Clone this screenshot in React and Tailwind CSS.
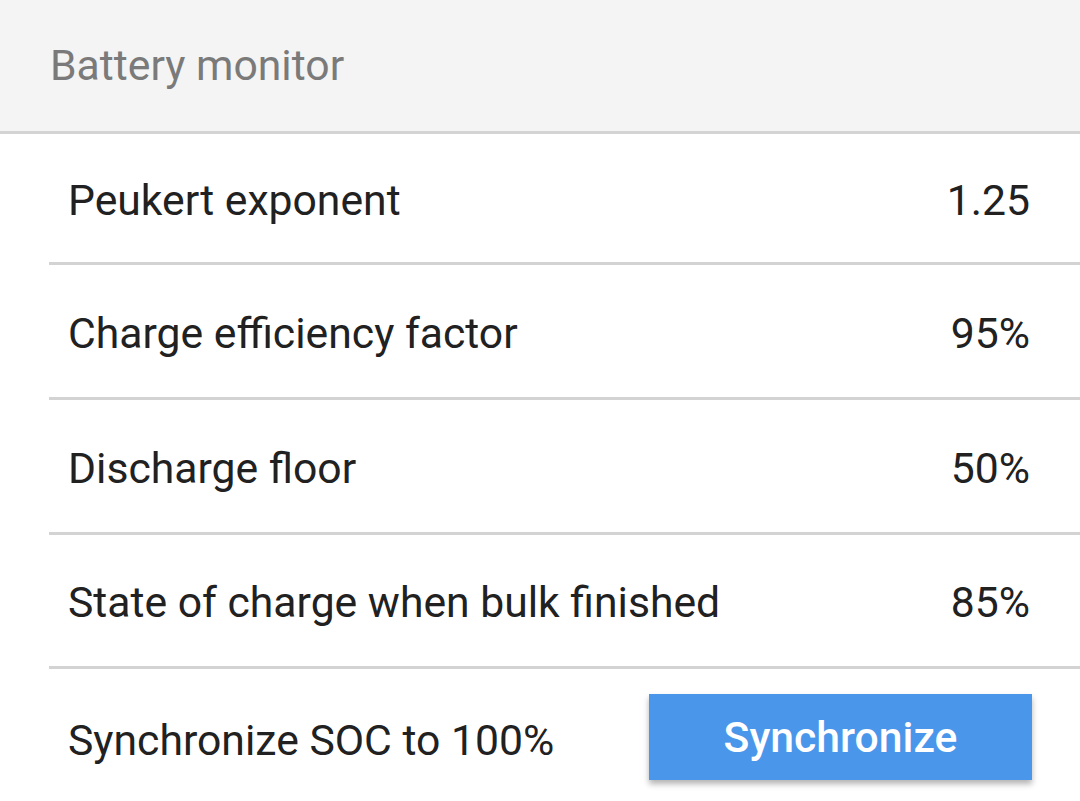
import React from "react";

const rows = [
  { label: "Peukert exponent", value: "1.25", h: "h-[131px]" },
  { label: "Charge efficiency factor", value: "95%", h: "h-[135px]" },
  { label: "Discharge floor", value: "50%", h: "h-[135px]" },
  { label: "State of charge when bulk finished", value: "85%", h: "h-[134px]" },
];

export default function App() {
  return (
    <div
      className="w-[1080px] h-[801px] bg-white overflow-hidden text-[42.7px] text-[#212121]"
      style={{ fontFamily: "Roboto, 'Liberation Sans', sans-serif" }}
    >
      {/* Section header */}
      <div className="h-[134px] bg-[#f4f4f4] border-b-[3px] border-[#d3d3d3] flex items-center pl-[50px] text-[#7a7a7a]">
        Battery monitor
      </div>

      {/* Settings list */}
      <div className="pl-[49px]">
        {rows.map((row) => (
          <div
            key={row.label}
            className={`${row.h} border-b-[3px] border-[#d3d3d3] flex items-center justify-between pl-[19px] pr-[50px] pt-[4px]`}
          >
            <span>{row.label}</span>
            <span>{row.value}</span>
          </div>
        ))}

        {/* Synchronize row */}
        <div className="h-[132px] flex items-center justify-between pl-[19px] pr-[48px]">
          <span className="pt-[10px]">Synchronize SOC to 100%</span>
          <button className="w-[383px] h-[86px] bg-[#4a96eb] text-white font-medium shadow-[0_4px_6px_rgba(0,0,0,0.3)] mt-[4px]">
            Synchronize
          </button>
        </div>
      </div>
    </div>
  );
}
